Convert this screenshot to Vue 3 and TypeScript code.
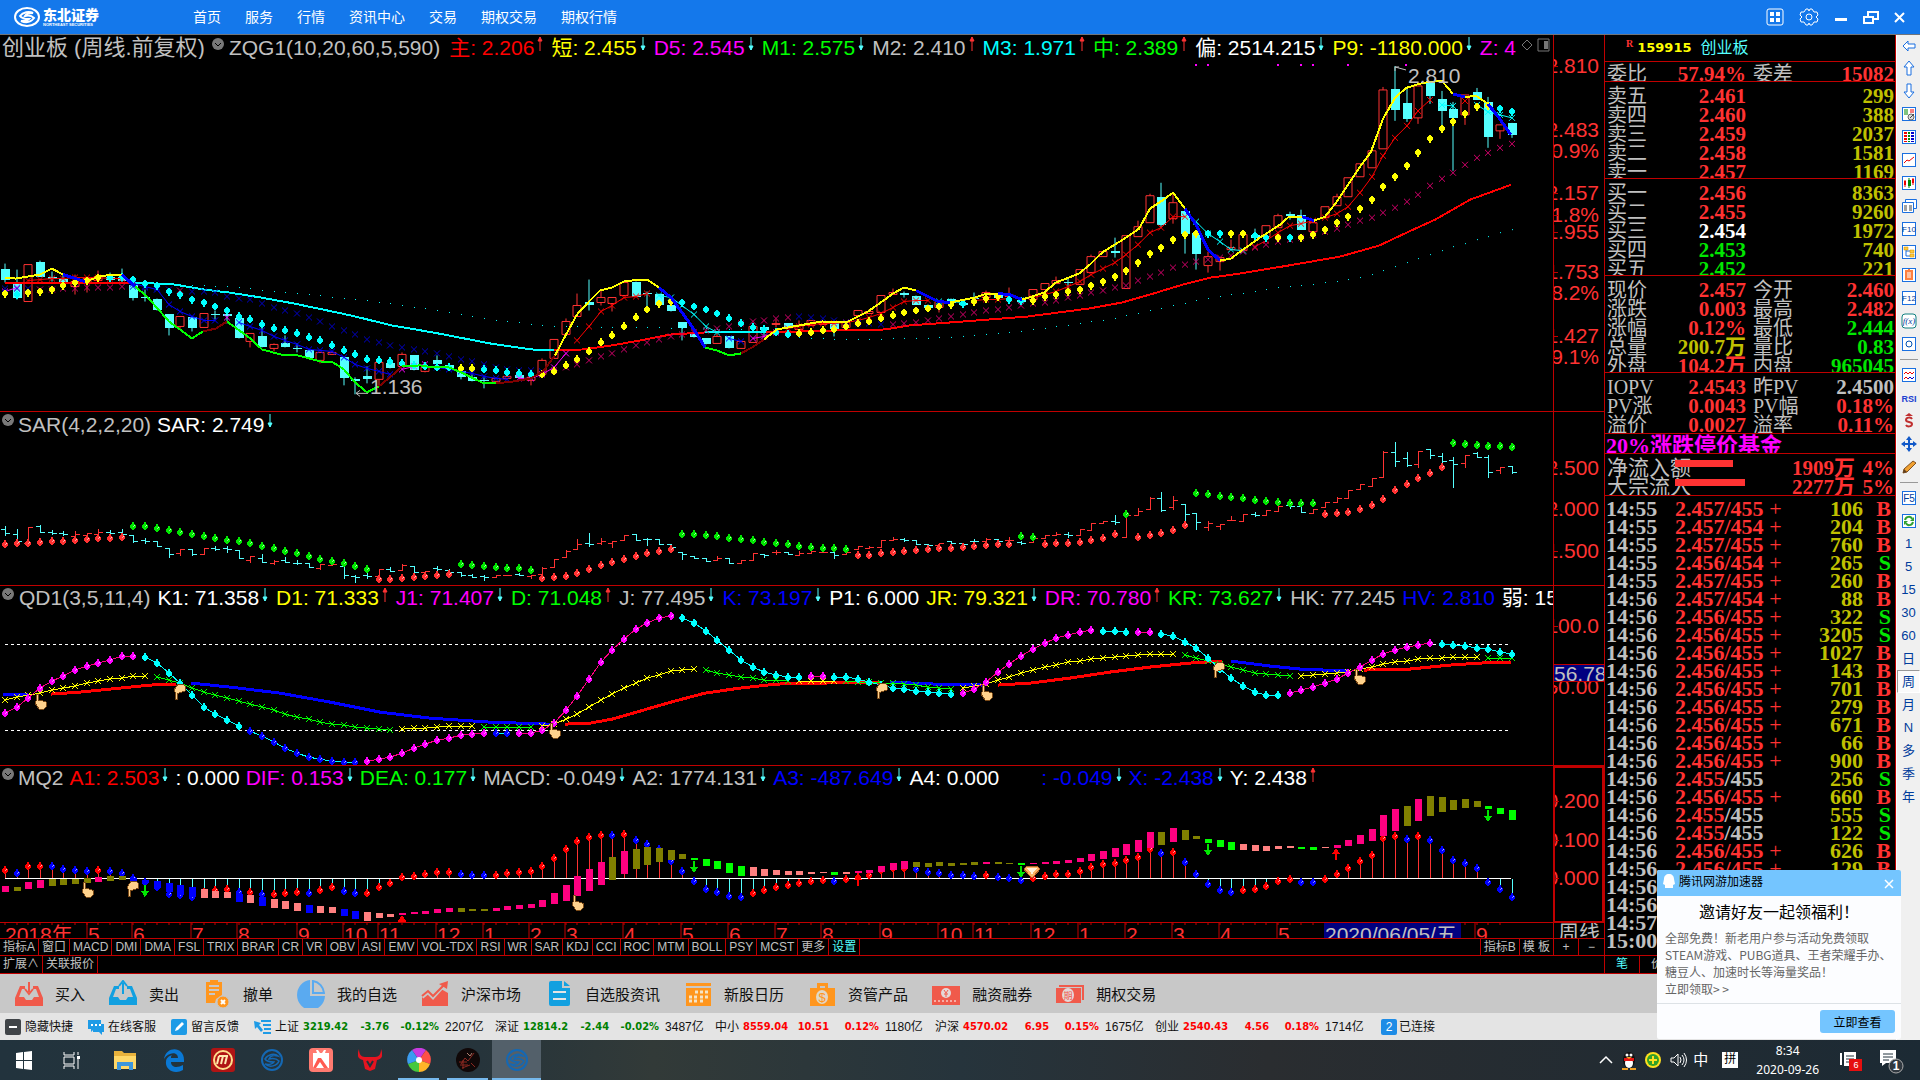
<script setup lang="ts">
type Pt = [number, number]
type Run = [number, string]
interface Mark { x: number; y: number; color: string }
interface Seg { color: string; d: string }
interface Reading { text: string; color: string; dir?: 'up' | 'down'; gap?: boolean }

const RED = '#ff3232'
const CYAN = '#00ffff'
const YELLOW = '#ffff00'
const MAGENTA = '#ff00ff'
const BLUE = '#0000ff'
const LIME = '#00ff00'
const SILVER = '#c0c0c0'
const BARS = 130

const barX = (i: number): number => Math.round(5 + 11.68 * i)
const parse = (s: string): Pt[] => s.trim().split(/\s+/).map((p) => p.split(',').map(Number) as Pt)

function valueAt(pts: Pt[], x: number): number {
  if (x <= pts[0][0]) return pts[0][1]
  for (let k = 1; k < pts.length; k++) {
    if (x <= pts[k][0]) {
      const [x0, y0] = pts[k - 1]
      const [x1, y1] = pts[k]
      return Math.round(y0 + ((y1 - y0) * (x - x0)) / (x1 - x0))
    }
  }
  return pts[pts.length - 1][1]
}

function series(s: string, runs: Run[]): { marks: Mark[]; lines: Seg[] } {
  const pts = parse(s)
  const marks: Mark[] = []
  const lines: Seg[] = []
  let i = 0
  for (const [end, color] of runs) {
    const run: string[] = []
    for (; i <= end && i < BARS; i++) {
      const x = barX(i)
      const y = valueAt(pts, x)
      marks.push({ x, y, color })
      run.push(`${x} ${y}`)
    }
    if (run.length > 1) lines.push({ color, d: 'M' + run.join('L') })
  }
  return { marks, lines }
}

const line = (color: string, s: string): Seg => ({ color, d: 'M' + parse(s).map((p) => p.join(' ')).join('L') })

function group(marks: Mark[], shape: (m: Mark) => string): Seg[] {
  const by = new Map<string, string>()
  for (const m of marks) by.set(m.color, (by.get(m.color) ?? '') + shape(m))
  return [...by].map(([color, d]) => ({ color, d }))
}
const dots = (m: Mark[]): Seg[] => group(m, ({ x, y }) => `M${x - 3} ${y - 1}l2 -2v-1h2v1l2 2v2l-2 2v1h-2v-1l-2 -2z`)
const crosses = (m: Mark[]): Seg[] => group(m, ({ x, y }) => `M${x - 3} ${y - 3}l6 6M${x - 3} ${y + 3}l6 -6`)
const glints = (m: Mark[]): string => m.map(({ x, y }) => `M${x} ${y}h1v-1h1`).join('')

/* main chart */
const shortLine: Seg[] = [
  line(YELLOW, '5,278 16,279 40,275 52,269 63,275'),
  line(BLUE, '63,275 85,282'),
  line(YELLOW, '85,282 100,277 112,275 122,275'),
  line(BLUE, '122,275 135,287'),
  line(LIME, '135,287 147,297 169,322 192,339 203,332'),
  line('#800000', '203,332 216,329 227,322'),
  line(LIME, '227,322 249,338 262,350 284,356 298,356 320,362 333,363 344,370 355,383 367,393 379,387'),
  line('#800000', '379,387 391,377 402,367'),
  line(LIME, '402,367 420,366 433,368 449,368 461,373 473,379 484,384 496,384'),
  line('#800000', '496,384 514,382 531,379 543,372 555,356'),
  line(YELLOW, '555,356 565,337 577,315 589,302 600,291 612,288 624,282 640,280 647,280 659,288'),
  line(BLUE, '659,288 671,298 682,313 694,330 705,348'),
  line(LIME, '705,348 717,351 729,356 741,354'),
  line('#800000', '741,354 752,348 764,340'),
  line(YELLOW, '764,340 777,330 799,326 822,322 846,323 868,312 885,300 893,294 904,288 916,291'),
  line(BLUE, '916,291 938,302 950,303'),
  line(YELLOW, '950,303 975,298 987,294 998,294'),
  line(BLUE, '998,294 1009,295 1022,300'),
  line(YELLOW, '1022,300 1032,297 1044,293 1056,283 1079,274 1091,264 1102,253 1126,238 1139,229 1150,209 1162,201 1173,193 1185,209'),
  line(BLUE, '1185,209 1196,225 1208,250 1220,261'),
  line(YELLOW, '1220,261 1231,259 1243,250 1260,238 1280,225 1289,217 1302,217'),
  line(BLUE, '1302,217 1314,221'),
  line(YELLOW, '1314,221 1325,217 1336,203 1348,185 1360,167 1371,152 1383,119 1395,98 1406,88 1419,84 1429,82 1442,81 1453,94'),
  line(BLUE, '1453,94 1465,97'),
  line(YELLOW, '1465,97 1476,96 1488,104'),
  line(BLUE, '1488,104 1499,118 1511,135'),
]
const trend: Seg[] = [
  line('#ff0000', '5,283 135,283'),
  line(CYAN, '135,283 175,285 204,290 229,293 261,298 294,304 318,309 351,316 392,326 433,333 490,344 531,350 554,351'),
  line('#ff0000', '554,351 584,350 612,346 640,341 671,335 705,333'),
  line(CYAN, '705,333 766,333'),
  line('#ff0000', '766,333 836,331 885,330 909,326 950,323 1028,317 1089,309 1122,303 1150,295 1183,285 1211,278 1240,274 1288,266 1340,257 1379,246 1413,230 1435,220 1470,200 1511,185'),
]
const yearDots = series(
  '5,284 160,285 227,287 294,294 367,301 437,311 495,321 555,327 640,328 740,330 799,338 836,340 869,340 950,338 1009,333 1068,326 1113,319 1175,306 1207,299 1254,292 1280,288 1301,286 1336,282 1370,276 1406,263 1442,251 1476,240 1511,230',
  [[129, CYAN]],
).marks.slice(15).map((m) => `M${m.x} ${m.y}h1`).join('')

const bigDots = dots(series(
  '5,294 17,295 28,293 40,292 52,290 63,286 75,283 87,281 98,278 122,277 133,280 145,284 157,286 168,292 180,295 192,300 203,303 215,307 227,311 239,317 250,320 262,325 274,329 297,334 320,341 344,351 367,360 379,361 402,364 425,367 461,369 484,370 530,375 542,375 554,372 565,367 577,360 589,352 600,344 612,336 635,319 647,310 659,304 671,302 682,303 705,310 717,314 741,324 752,328 787,335 811,333 834,330 846,327 881,319 904,313 939,307 962,304 986,299 997,297 1009,300 1032,301 1044,297 1079,290 1102,282 1114,277 1126,271 1138,263 1149,254 1161,248 1173,240 1184,235 1196,234 1243,234 1266,238 1301,238 1313,235 1324,230 1336,224 1348,217 1371,201 1383,187 1406,167 1418,153 1429,140 1441,130 1453,122 1465,114 1476,107 1488,106 1499,109 1511,112',
  [[0, YELLOW], [1, CYAN], [8, YELLOW], [38, CYAN], [40, YELLOW], [45, CYAN], [57, YELLOW], [67, CYAN], [81, YELLOW], [82, CYAN], [85, YELLOW], [87, CYAN], [102, YELLOW], [104, CYAN], [106, YELLOW], [108, CYAN], [109, YELLOW], [110, CYAN], [127, YELLOW], [129, CYAN]],
).marks)

const slowCrosses = crosses(series(
  '5,289 28,289 40,290 75,289 122,287 157,288 180,291 215,293 227,297 250,300 274,308 297,314 320,322 344,331 367,340 390,346 414,350 437,354 461,360 484,365 507,370 542,372 554,371 577,365 600,357 624,350 647,343 671,337 694,333 717,329 752,322 787,318 799,317 822,319 846,323 892,325 916,323 962,315 1009,308 1056,301 1079,296 1126,286 1149,277 1173,268 1196,262 1231,256 1254,248 1278,242 1301,238 1336,229 1371,218 1406,203 1429,187 1453,173 1476,158 1499,148 1511,144',
  [[2, '#0000c8'], [10, '#d4006a'], [14, '#0000c8'], [15, '#d4006a'], [46, '#0000c8'], [67, '#d4006a'], [75, '#0000c8'], [129, '#d4006a']],
).marks)

const fast = series(
  '5,292 17,288 28,281 52,279 75,278 122,279 135,285 157,290 168,304 180,312 192,317 203,321 216,321 227,318 239,323 262,331 274,337 297,345 309,350 333,352 344,358 355,365 367,369 390,375 402,370 425,365 437,368 461,372 484,377 507,380 530,379 542,375 554,368 565,355 577,341 589,327 600,313 624,298 640,296 647,294 671,298 682,306 694,315 705,326 717,333 729,339 741,342 764,337 787,329 811,325 846,323 857,321 881,314 904,302 927,301 962,303 974,301 1009,299 1021,301 1032,298 1056,292 1079,283 1091,275 1114,264 1126,255 1138,245 1149,233 1161,228 1173,217 1184,217 1196,222 1208,234 1219,241 1231,250 1243,251 1254,248 1278,233 1289,226 1313,221 1336,215 1348,207 1359,194 1371,179 1383,156 1394,139 1406,127 1418,111 1429,100 1441,105 1453,106 1465,101 1476,104 1488,112 1511,118',
  [[1, MAGENTA], [10, '#ff0000'], [18, BLUE], [19, MAGENTA], [33, BLUE], [36, MAGENTA], [43, BLUE], [48, MAGENTA], [55, '#ff0000'], [61, CYAN], [63, BLUE], [66, MAGENTA], [79, '#ff0000'], [82, CYAN], [86, '#ff0000'], [87, CYAN], [101, '#ff0000'], [106, CYAN], [122, '#ff0000'], [124, CYAN], [125, '#ff0000'], [129, CYAN]],
)
const fastCrosses = crosses(fast.marks)

/* each candle: direction, high, body top, body bottom, low */
const candleText = `c264,269,280,283 c270,282,298,300 r265,265,302,302 c261,262,277,277 c272,277,279,282 c274,279,282,285 r275,282,287,295 r279,279,283,293 r271,277,281,281 c273,277,280,284
c269,277,281,284 c285,285,298,301 c290,297,298,302 c299,299,311,311 c315,315,329,336 r317,317,327,330 c318,318,329,332 r314,314,328,328 c311,315,316,320 c311,315,317,324
c319,319,339,339 r334,334,342,348 c328,337,348,348 r344,345,349,352 c336,344,348,348 c344,349,350,353 c351,351,359,359 r353,353,361,364 r352,353,355,355 c358,358,379,386
c378,380,382,395 c367,377,380,384 r363,363,380,386 c359,364,369,369 r353,355,367,367 c356,356,371,371 r368,368,372,373 c356,361,365,371 c364,366,370,370 c372,372,378,380
c375,378,382,382 c378,381,382,389 r379,379,382,382 r377,377,379,379 c373,376,379,379 r378,378,381,386 r359,361,375,377 r340,340,359,359 r319,322,335,335 r294,306,317,317
c280,302,305,311 r290,298,303,306 r298,298,304,312 r283,283,296,296 c282,282,297,297 c292,293,294,308 c294,294,305,305 c305,305,312,312 c323,323,329,341 c334,334,338,338
c339,339,345,345 r333,337,344,344 c337,337,349,349 r342,342,349,349 r327,327,343,343 c328,328,331,336 r320,324,325,328 c324,324,329,329 r321,326,330,330 r321,321,326,326
r323,323,325,325 c323,323,330,337 r323,323,328,328 r311,311,316,316 r310,312,314,314 r296,296,313,313 r289,293,295,295 c292,293,295,298 c296,296,305,305 c305,305,308,308
r302,302,308,313 c299,299,303,303 c303,303,305,305 c293,298,299,304 r291,293,298,298 c294,294,298,298 r288,295,297,298 c298,300,302,305 r290,290,300,300 r284,284,290,290
r277,281,284,284 c278,282,283,289 r270,270,285,285 r255,257,273,273 r252,252,257,257 c238,251,253,258 r236,236,289,289 r221,227,237,237 r194,196,223,223 c183,197,225,228
r193,203,219,224 c211,211,234,254 c233,233,254,270 r252,257,266,273 r258,258,262,271 r240,248,250,250 r235,235,251,251 c229,235,238,240 r226,226,237,237 r214,216,228,228
c212,214,216,220 c210,215,230,230 r223,223,232,232 r207,207,218,218 r194,197,206,206 r178,178,197,197 r164,164,177,177 r151,151,168,168 r87,90,149,149 c66,89,110,121
c88,103,119,122 r86,86,118,124 c83,83,96,104 c91,99,111,130 c102,109,118,171 r95,95,115,125 c88,92,100,100 c97,102,137,148 r125,125,131,139 c123,123,135,138`
const candles = candleText.split(/\s+/).map((t, i) => {
  const [high, top, bottom, low] = t.slice(1).split(',').map(Number)
  return { x: barX(i), up: t[0] === 'r', high, top, bottom, low }
})
const fallWicks = candles.filter((c) => !c.up).map((c) => `M${c.x} ${c.high}V${c.low}`).join('')
const fallBodies = candles.filter((c) => !c.up).map((c) => `M${c.x - 4} ${c.top}h9V${Math.max(c.bottom, c.top + 1)}h-9z`).join('')
const riseShapes = candles.filter((c) => c.up).map((c) => `M${c.x} ${c.high}V${c.top}M${c.x} ${c.bottom}V${c.low}M${c.x - 4} ${c.top}h8V${c.bottom}h-8z`).join('')
const signalDots = [1196, 1208, 1278, 1301, 1313, 1348, 1406]

/* SAR */
const sarY = (y: number): number => Math.round(469 + (0.017 + (y - 130) / 195) * 83)
const sarBars = (up: boolean): string => candles.filter((c) => c.up === up).map((c) => {
  const open = sarY(up ? c.bottom : c.top)
  const close = sarY(up ? c.top : c.bottom)
  return `M${c.x} ${sarY(c.high)}V${sarY(c.low) + 1}M${c.x - 4} ${open}h4M${c.x} ${close}h5`
}).join('')
const sarRise = sarBars(true)
const sarFall = sarBars(false)
const G = '#00e600'
const sar = series(
  '5,545 122,538 133,527 145,527 168,531 215,539 239,542 262,547 297,554 320,560 344,564 367,570 379,580 402,579 425,577 449,575 461,565 484,567 530,570 542,579 565,577 589,570 612,563 635,557 647,554 671,550 682,535 694,535 717,537 741,540 776,544 811,548 846,550 857,556 869,556 892,553 927,550 962,548 997,545 1009,545 1021,537 1032,537 1044,545 1079,543 1114,537 1126,515 1138,538 1161,534 1184,529 1196,494 1231,498 1266,502 1289,504 1313,504 1324,515 1348,513 1371,507 1383,500 1394,492 1418,479 1441,470 1453,444 1476,446 1499,447 1511,448',
  [[10, RED], [31, G], [38, RED], [45, G], [57, RED], [72, G], [86, RED], [88, G], [95, RED], [96, G], [101, RED], [112, G], [123, RED], [129, G]],
).marks
const sarDots = dots(sar)
const sarGlints = glints(sar)

/* QD1 */
const jRuns: Run[] = [[11, MAGENTA], [20, CYAN], [30, BLUE], [41, MAGENTA], [43, BLUE], [57, MAGENTA], [68, CYAN], [70, MAGENTA], [81, CYAN], [93, MAGENTA], [96, CYAN], [98, MAGENTA], [109, CYAN], [122, MAGENTA], [129, CYAN]]
const j = series(
  '5,713 17,707 28,698 40,688 52,681 63,676 75,670 98,663 122,656 133,656 145,657 157,663 168,672 180,683 192,695 203,706 215,714 239,726 262,736 285,748 309,757 332,761 355,762 367,761 390,757 414,748 437,740 461,735 484,733 530,733 542,730 554,723 565,711 577,696 589,679 600,663 612,650 624,639 635,630 647,623 659,618 671,616 682,618 694,623 705,630 717,640 729,650 741,660 752,667 764,672 787,677 822,676 846,677 857,679 892,688 927,692 951,694 962,693 974,689 986,682 997,673 1009,664 1021,656 1032,649 1044,643 1056,638 1067,635 1091,630 1126,632 1149,632 1161,634 1173,636 1184,641 1196,648 1208,658 1219,668 1231,678 1243,686 1254,692 1266,695 1278,695 1289,693 1313,687 1336,679 1359,668 1371,661 1383,654 1406,647 1429,643 1441,644 1465,646 1488,649 1511,654',
  jRuns,
)
const jDots = dots(j.marks)
const jGlints = glints(j.marks.filter((m) => m.color !== CYAN))
const jLines = j.lines.map((l) => ({ ...l, color: l.color === BLUE ? CYAN : l.color === MAGENTA ? '#ff0080' : l.color }))
const k = series(
  '5,700 28,695 52,690 98,681 133,676 145,676 157,677 180,683 203,692 227,698 262,707 297,717 332,724 367,728 390,730 402,729 449,726 472,726 484,727 530,727 542,726 554,724 577,714 600,700 624,688 647,678 671,671 694,669 705,670 729,675 764,680 799,681 846,681 892,683 951,689 962,688 986,684 1009,677 1032,670 1067,662 1102,658 1149,654 1173,654 1184,655 1208,661 1231,667 1254,673 1289,676 1301,676 1348,672 1371,667 1394,662 1429,658 1476,657 1488,658 1511,658',
  [[12, YELLOW], [33, LIME], [40, YELLOW], [45, LIME], [59, YELLOW], [67, LIME], [71, YELLOW], [81, LIME], [100, YELLOW], [110, LIME], [126, YELLOW], [129, LIME]],
)
const kCrosses = crosses(k.marks)
const dLines: Seg[] = [
  line(BLUE, '3,694 28,694'),
  line('#ff0000', '51,694 80,692 120,688 150,685 176,684'),
  line(BLUE, '191,683 230,687 280,693 330,702 380,712 430,718 490,722 550,724'),
  line('#ff0000', '565,724 590,723 612,719 640,711 671,702 705,693 740,688 776,684 870,682 880,682'),
  line(BLUE, '890,682 935,684 985,685'),
  line('#ff0000', '998,685 1030,683 1070,678 1110,672 1150,667 1190,663 1222,661'),
  line(BLUE, '1231,661 1270,666 1300,669 1350,671'),
  line('#ff0000', '1364,670 1410,669 1450,665 1480,663 1511,662'),
]
const qdHands = [
  { x: 41, y: 701, down: false }, { x: 180, y: 692, down: true }, { x: 555, y: 730, down: false },
  { x: 882, y: 691, down: true }, { x: 987, y: 692, down: false }, { x: 1219, y: 670, down: true }, { x: 1360, y: 676, down: false },
]

/* MQ2 */
const stemText = 'r870 b873 r866 r866 b866 b869 b870 b871 r870 b871 b873 b878 b882 b887 b894 b895 b897 r892 r890 r889 b892 r892 b894 r894 r893 r892 b893 r890 r887 b891 b893 r893 r887 r883 r877 r876 r874 r872 r872 b874 b875 b875 r875 r873 r872 r871 r866 r858 r849 r841 r837 r835 b835 r834 b840 b844 b849 b861 b871 b881 b889 b892 b896 b897 r893 r890 r887 r885 r883 r881 r880 b881 r879 r877 r875 r870 r868 r868 b869 b872 b873 b875 b875 b876 r875 b877 b878 b880 r878 r876 r874 r874 r871 r867 r864 r863 r860 r857 r849 b853 r852 b862 b874 b884 b890 b892 r890 r889 r886 r881 r879 b882 b882 r879 r874 r868 r861 r855 r838 r836 b839 r836 b840 b850 b860 b863 b868 b882 b889 b897'
const stems: Mark[] = stemText.split(' ').map((t, i) => ({ x: barX(i), y: Number(t.slice(1)), color: t[0] === 'r' ? '#ff0000' : BLUE }))
const stemDots = dots(stems)
const stemGlints = glints(stems)
const stemsUp = stems.filter((s) => s.y < 878).map((s) => `M${s.x} ${s.y}V878`).join('')
const stemsDown = stems.filter((s) => s.y > 879).map((s) => `M${s.x} ${s.y}V879`).join('')
const blockText = 'M886,892 O887,891 M882,889 M880,888 O879,886 O879,885 O879,884 O878,883 M877,882 O876,881 O876,880 B878,881 B880,883 B881,888 B883,892 B885,895 B887,897 P889,898 P891,898 P892,898 B894,902 P895,903 B897,906 P899,908 P901,909 P903,911 B905,913 P906,913 P907,913 B909,916 B911,919 P912,921 P913,918 P914,917 M913,915 M912,914 M911,914 M909,913 M908,912 O908,912 O909,911 O909,911 M908,911 M906,910 M905,909 M904,908 M900,907 M893,904 M885,901 M876,896 M869,891 M862,885 O857,880 M851,874 O849,869 O847,865 O848,862 O850,860 O854,859 G858,860 G859,866 G861,869 G863,873 G866,876 P867,876 P869,876 P870,875 P871,875 P871,875 P872,874 P872,873 G872,875 P872,874 M871,873 M870,873 M866,872 M863,870 M861,869 O862,867 O863,867 O862,866 O863,866 O863,865 O862,865 M862,864 O862,864 O863,864 G863,865 M863,864 M862,864 M861,864 M860,863 M858,862 M854,861 M851,859 M848,857 M844,855 M840,852 M832,848 O832,845 M828,842 O830,840 O836,839 G839,843 G840,847 G842,850 P844,850 P845,851 P846,851 P846,849 P846,848 G847,849 G847,850 P847,848 M845,848 M840,846 M835,844 M829,841 M815,836 M809,831 O806,826 M799,821 O796,816 O797,812 O800,810 O799,808 O801,807 G806,809 G808,814 G810,820'
const blockColor: Record<string, string> = { M: '#ff0080', O: '#808000', B: BLUE, P: '#ff8080', G: LIME }
const blocks = blockText.split(' ').map((t, i) => {
  const [top, bottom] = t.slice(1).split(',').map(Number)
  return { x: barX(i) - 3, y: top, h: bottom - top, color: blockColor[t[0]] }
})
const mqHands = [{ x: 88, y: 889, down: false }, { x: 133, y: 889, down: true }, { x: 578, y: 902, down: false }]
const sellArrows = [[145, 885], [694, 861], [1021, 866], [1208, 844], [1488, 810]]
const buyArrows = [[858, 875], [1336, 849]]

/* panel titles */
const mainReadings: Reading[] = [
  { text: 'ZQG1(10,20,60,5,590)', color: SILVER },
  { text: '主: 2.206', color: '#ff0000', dir: 'up' },
  { text: '短: 2.455', color: YELLOW, dir: 'down' },
  { text: 'D5: 2.545', color: MAGENTA, dir: 'down' },
  { text: 'M1: 2.575', color: LIME, dir: 'down' },
  { text: 'M2: 2.410', color: SILVER, dir: 'up' },
  { text: 'M3: 1.971', color: CYAN, dir: 'up' },
  { text: '中: 2.389', color: LIME, dir: 'up' },
  { text: '偏: 2514.215', color: '#ffffff', dir: 'down' },
  { text: 'P9: -1180.000', color: YELLOW, dir: 'down' },
  { text: 'Z: 4', color: MAGENTA },
]
const sarReadings: Reading[] = [
  { text: 'SAR(4,2,2,20)', color: SILVER },
  { text: 'SAR: 2.749', color: '#ffffff', dir: 'down' },
]
const qdReadings: Reading[] = [
  { text: 'QD1(3,5,11,4)', color: SILVER },
  { text: 'K1: 71.358', color: '#ffffff', dir: 'down' },
  { text: 'D1: 71.333', color: YELLOW, dir: 'up' },
  { text: 'J1: 71.407', color: MAGENTA, dir: 'down' },
  { text: 'D: 71.048', color: LIME, dir: 'up' },
  { text: 'J: 77.495', color: SILVER, dir: 'down' },
  { text: 'K: 73.197', color: BLUE, dir: 'down' },
  { text: 'P1: 6.000', color: '#ffffff' },
  { text: 'JR: 79.321', color: YELLOW, dir: 'down' },
  { text: 'DR: 70.780', color: MAGENTA, dir: 'up' },
  { text: 'KR: 73.627', color: LIME, dir: 'down' },
  { text: 'HK: 77.245', color: SILVER },
  { text: 'HV: 2.810', color: BLUE },
  { text: '弱: 15', color: '#ffffff' },
]
const mqReadings: Reading[] = [
  { text: 'MQ2', color: SILVER },
  { text: 'A1: 2.503', color: '#ff0000', dir: 'down' },
  { text: ': 0.000', color: '#ffffff' },
  { text: 'DIF: 0.153', color: MAGENTA, dir: 'down' },
  { text: 'DEA: 0.177', color: LIME, dir: 'down' },
  { text: 'MACD: -0.049', color: SILVER, dir: 'down' },
  { text: 'A2: 1774.131', color: SILVER, dir: 'down' },
  { text: 'A3: -487.649', color: BLUE, dir: 'down' },
  { text: 'A4: 0.000', color: '#ffffff' },
  { text: ': -0.049', color: BLUE, dir: 'down', gap: true },
  { text: 'X: -2.438', color: BLUE, dir: 'down' },
  { text: 'Y: 2.438', color: '#ffffff', dir: 'up' },
]
const mainScale = [
  { t: '2.810', y: 31 }, { t: '2.483', y: 95 }, { t: '0.9%', y: 116 }, { t: '2.157', y: 158 }, { t: '1.8%', y: 180 },
  { t: '1.955', y: 197 }, { t: '1.753', y: 237 }, { t: '8.2%', y: 258 }, { t: '1.427', y: 301 }, { t: '9.1%', y: 322 },
]
const sarScale = [{ t: '2.500', y: 56 }, { t: '2.000', y: 97 }, { t: '1.500', y: 139 }]
const qdScale = [{ t: '100.0', y: 40 }, { t: '50.00', y: 101 }]
const mqScale = [{ t: '0.200', y: 33 }, { t: '0.100', y: 72 }, { t: '0.000', y: 110 }]

const months: [number, string][] = [
  [87, '5'], [132, '6'], [191, '7'], [237, '8'], [297, '9'], [343, '10'], [378, '11'], [436, '12'], [483, '1'], [529, '2'], [565, '3'], [623, '4'],
  [681, '5'], [728, '6'], [775, '7'], [821, '8'], [880, '9'], [938, '10'], [973, '11'], [1031, '12'], [1078, '1'], [1125, '2'], [1172, '3'], [1219, '4'], [1277, '5'], [1475, '9'],
]
const minorTicks = Array.from({ length: 129 }, (_, i) => `M${barX(i)} 0v2`).join('')

const tabs = ['指标A', '窗口', 'MACD', 'DMI', 'DMA', 'FSL', 'TRIX', 'BRAR', 'CR', 'VR', 'OBV', 'ASI', 'EMV', 'VOL-TDX', 'RSI', 'WR', 'SAR', 'KDJ', 'CCI', 'ROC', 'MTM', 'BOLL', 'PSY', 'MCST', '更多', '设置']

/* quotes */
const asks = [['卖五', '2.461', '299'], ['卖四', '2.460', '388'], ['卖三', '2.459', '2037'], ['卖二', '2.458', '1581'], ['卖一', '2.457', '1169']]
const bids = [['买一', '2.456', '8363', 'r'], ['买二', '2.455', '9260', 'r'], ['买三', '2.454', '1972', 'w'], ['买四', '2.453', '740', 'g'], ['买五', '2.452', '221', 'g']]
const now = [
  ['现价', '2.457', 'r', '今开', '2.460', 'r'],
  ['涨跌', '0.003', 'r', '最高', '2.482', 'r'],
  ['涨幅', '0.12%', 'r', '最低', '2.444', 'g'],
  ['总量', '200.7万', 'y', '量比', '0.83', 'g'],
  ['外盘', '104.2万', 'r', '内盘', '965045', 'g'],
]
const pv = [
  ['IOPV', '2.4543', 'r', '昨PV', '2.4500', 's'],
  ['PV涨', '0.0043', 'r', 'PV幅', '0.18%', 'r'],
  ['溢价', '0.0027', 'r', '溢率', '0.11%', 'r'],
]
const flows = [{ name: '净流入额', bar: 58, amount: '1909万', pct: '4%' }, { name: '大宗流入', bar: 70, amount: '2277万', pct: '5%' }]
const deals = `14:55 457 455 106 B|14:55 457 454 204 B|14:55 457 455 760 B|14:55 456 454 265 S|14:55 457 455 260 B|14:56 457 454 88 B|14:56 456 455 322 S|14:56 456 455 3205 S|14:56 456 455 1027 B|14:56 456 455 143 B|14:56 456 455 701 B|14:56 456 455 279 B|14:56 456 455 671 B|14:56 456 455 66 B|14:56 456 455 900 B|14:56 455 455 256 S|14:56 456 455 660 B|14:56 455 455 555 S|14:56 455 455 122 S|14:56 456 455 626 B|14:56 456 455 129 B|14:56|14:56|14:57|15:00`
  .split('|').map((r) => {
    const [time, bid, ask, volume, side] = r.split(' ')
    return { time, bid, ask, volume, side }
  })

/* icons */
const frame = '<rect x="1.5" y="1.5" width="13" height="13" fill="#fff" stroke="#1a6fe0"/>'
const sideIcons: { name: string; art: string }[] = [
  { name: '后退', art: '<path d="M2 8l5-5v3h7v4H7v3z" fill="#fff" stroke="#1a6fe0"/>' },
  { name: '上翻', art: '<path d="M8 1l5 6h-3v8H6V7H3z" fill="#fff" stroke="#1a6fe0"/>' },
  { name: '下翻', art: '<path d="M8 15l5-6h-3V1H6v8H3z" fill="#fff" stroke="#1a6fe0"/>' },
  { name: '自选', art: frame + '<path d="M3 4h4M3 6h4M3 8h4" stroke="#080"/><path d="M9 4h4M9 6h4" stroke="#e00"/><circle cx="10" cy="11" r="3" fill="#ddd" stroke="#666"/><path d="M9 12l4-4" stroke="#444"/>' },
  { name: '报价', art: frame + '<path d="M4.5 3v10" stroke="#e00" stroke-width="3" stroke-dasharray="2 1"/><path d="M8 3v10" stroke="#080" stroke-width="2" stroke-dasharray="2 1"/><path d="M11.5 3v10" stroke="#00c" stroke-width="3" stroke-dasharray="2 1"/>' },
  { name: '分时', art: frame + '<path d="M3 11l3-3 2 1 5-4" fill="none" stroke="#e00"/>' },
  { name: 'K线', art: frame + '<path d="M4 5v7M12 3v7" stroke="#e00"/><path d="M3 6h2v4H3zM11 4h2v4h-2z" fill="#e00"/><path d="M8 3v10" stroke="#080"/><path d="M7 5h3v6H7z" fill="#080"/>' },
  { name: '资讯', art: '<path d="M4.5 1.5h11v9h-11z" fill="#fff" stroke="#1a6fe0"/><path d="M1.5 4.5h11v10h-11z" fill="#fff" stroke="#1a6fe0"/><path d="M3 8h3M8 8h3M3 10h3M8 10h3M3 12h3M8 12h3" stroke="#444"/>' },
  { name: 'F10', art: frame + '<text x="8" y="11" font-size="8" text-anchor="middle" fill="#003c9c" font-family="Liberation Sans, sans-serif">F10</text>' },
  { name: '板块', art: frame + '<path d="M5 6v6h4M5 7h4" fill="none" stroke="#1a6fe0"/><path d="M3 3h4v3H3zM9 6h4v3H9zM9 10h4v3H9z" fill="#ffc83c" stroke="#c89000" stroke-width=".5"/>' },
  { name: '自', art: frame + '<path d="M7 2h2v1h3v10H4V3h3z" fill="#ff8040"/><path d="M6 6h4M6 8h4M6 10h4" stroke="#fff"/>' },
  { name: 'F12', art: frame + '<text x="8" y="11" font-size="8" text-anchor="middle" fill="#003c9c" font-family="Liberation Sans, sans-serif">F12</text>' },
  { name: '公式', art: '<rect x="1" y="1" width="14" height="14" rx="3" fill="#fff" stroke="#108080"/><text x="8" y="11" font-size="9" font-style="italic" text-anchor="middle" fill="#003c9c" font-family="Liberation Serif, serif">f(x)</text>' },
  { name: '区间', art: frame + '<circle cx="8" cy="8" r="3" fill="none" stroke="#0050b0"/>' },
  { name: '', art: '' },
  { name: '叠加', art: frame + '<path d="M3 7l2-2 2 2 2-2 2 2 2-2M3 12l2-2 2 2" fill="none" stroke="#e00"/><path d="M7 12l2-2 2 2 2-2" fill="none" stroke="#00c"/>' },
  { name: 'RSI', art: '<text x="8" y="12" font-size="9" font-weight="bold" text-anchor="middle" fill="#2040d0" font-family="Liberation Sans, sans-serif">RSI</text>' },
  { name: '分红', art: '<path d="M8 0l4 3H4z" fill="#c03030"/><path d="M11 6c-1-2-6-2-6 1s6 1 6 4-5 3-6 1" fill="none" stroke="#c03030" stroke-width="2"/>' },
  { name: '移动', art: '<path d="M8 0l3 4H9v3h3V5l4 3-4 3V9H9v3h2l-3 4-3-4h2V9H4v2L0 8l4-3v2h3V4H5z" fill="#1058c8"/>' },
  { name: '画线', art: '<path d="M2 14l1-4 9-8 3 2-9 9z" fill="#f0a030" stroke="#805020"/><path d="M2 14l1-4 3 3z" fill="#604020"/>' },
  { name: '', art: '' },
  { name: 'F5', art: frame + '<text x="8" y="12" font-size="10" text-anchor="middle" fill="#003c9c" font-family="Liberation Sans, sans-serif">F5</text>' },
  { name: '刷新', art: frame + '<path d="M4 7c1-4 6-4 7-1M12 9c-1 4-6 4-7 1" fill="none" stroke="#30a030" stroke-width="2"/><path d="M13 4v4H9zM3 12V8h4z" fill="#30a030"/>' },
]
const periods = ['1', '5', '15', '30', '60', '日', '周', '月', 'N', '多', '季', '年']

const actions: { label: string; art: string }[] = [
  { label: '买入', art: '<path d="M5 6h5v3H7L4 17h5l2 3h6l2-3h5l-3-8h-3V6h5l5 12v8H0v-8z" fill="#f05a4b"/><path d="M14 2v10M10 9l4 5 4-5" stroke="#f05a4b" stroke-width="2" fill="none"/>' },
  { label: '卖出', art: '<path d="M5 6h5v3H7L4 17h5l2 3h6l2-3h5l-3-8h-3V6h5l5 12v7H0v-7z" fill="#12a0e0"/><path d="M14 14V3M10 6l4-5 4 5" stroke="#12a0e0" stroke-width="2" fill="none"/>' },
  { label: '撤单', art: '<path d="M3 2h4V0h8v2h4v13l-6 4-1 4H3z" fill="#ff961e"/><path d="M6 6h10M6 10h10M6 14h6" stroke="#c8c8c8" stroke-width="2"/><circle cx="20" cy="22" r="6" fill="#ff961e" stroke="#c8c8c8"/><path d="M18 20l4 4M22 20l-4 4" stroke="#fff" stroke-width="2"/>' },
  { label: '我的自选', art: '<path d="M13 0A14 15 0 1 0 28 16H13z" fill="#5aaaf0"/><path d="M16 1a13 13 0 0 1 11 12H16z" fill="none" stroke="#5aaaf0" stroke-width="2"/>' },
  { label: '沪深市场', art: '<path d="M1 26V15l5-3 6 5 8-8 7 4v13z" fill="#f05a4b"/><path d="M1 17l6-5 5 5L23 5" fill="none" stroke="#c8c8c8" stroke-width="4"/><path d="M1 16l6-5 5 5L24 4" fill="none" stroke="#f05a4b" stroke-width="2"/><path d="M18 4l9-3-1 8z" fill="#f05a4b"/>' },
  { label: '自选股资讯', art: '<path d="M6 1h11v7h8v16q0 2-2 2H6q-2 0-2-2V3q0-2 2-2zM19 1l6 5h-6z" fill="#12a0e0"/><path d="M8 12h13M8 19h13" stroke="#e4e4e4" stroke-width="2"/>' },
  { label: '新股日历', art: '<path d="M2 3h25v3H2zM2 8h25v18H2z" fill="#ff961e"/><path d="M11 12h3M16 12h3M21 12h3M5 17h3M10 17h3M16 17h3M21 17h3M5 21h3M10 21h3M16 21h3" stroke="#f4e4c8" stroke-width="3"/>' },
  { label: '资管产品', art: '<path d="M9 3h11v5h7v18H2V8h7zM12 6v2h5V6z" fill="#ff961e" fill-rule="evenodd"/><ellipse cx="14" cy="17" rx="6" ry="7" fill="#e0d8c8"/><text x="14" y="22" font-size="13" text-anchor="middle" fill="#ff961e" font-family="Liberation Sans, sans-serif">$</text>' },
  { label: '融资融券', art: '<path d="M0 6h28v19H0z" fill="#f05a4b"/><path d="M2 21h24" stroke="#fff" stroke-dasharray="2 2"/><circle cx="14" cy="13" r="5" fill="#e4d8d8"/><path d="M12 10l2 3 2-3M14 13v4M12 14h4" stroke="#f05a4b" fill="none"/>' },
  { label: '期权交易', art: '<path d="M3 5h25v15h-2V7H3z" fill="#f05a4b"/><path d="M0 8h25v15H0z" fill="#f05a4b"/><ellipse cx="12" cy="15" rx="6" ry="7" fill="#e4d8d8"/><text x="12" y="19" font-size="9" text-anchor="middle" fill="#f05a4b" font-family="Noto Sans CJK SC, sans-serif">期</text>' },
]
const links: { label: string; art: string }[] = [
  { label: '隐藏快捷', art: '<rect width="16" height="16" rx="2" fill="#404448"/><path d="M4 8h8" stroke="#fff" stroke-width="2"/>' },
  { label: '在线客服', art: '<path d="M0 1h13v9H6l-3 3v-3H0z" fill="#1e9be6"/><path d="M5 5h11v8h-2v3l-3-3H5z" fill="#1e9be6"/><path d="M3 6h2M7 6h2M11 6h2" stroke="#fff" stroke-width="2"/>' },
  { label: '留言反馈', art: '<rect width="16" height="16" rx="2" fill="#1e9be6"/><path d="M4 12l1-3 6-6 2 2-6 6z" fill="#fff"/>' },
]
const indices = [
  { name: '上证', price: '3219.42', change: '-3.76', pct: '-0.12%', amount: '2207亿', down: true },
  { name: '深证', price: '12814.2', change: '-2.44', pct: '-0.02%', amount: '3487亿', down: true },
  { name: '中小', price: '8559.04', change: '10.51', pct: '0.12%', amount: '1180亿', down: false },
  { name: '沪深', price: '4570.02', change: '6.95', pct: '0.15%', amount: '1675亿', down: false },
  { name: '创业', price: '2540.43', change: '4.56', pct: '0.18%', amount: '1714亿', down: false },
]
const swirl = '<circle cx="12" cy="12" r="10" fill="none" stroke="#1468b4" stroke-width="2"/><path d="M5 11c3-5 10-6 13-3-4-1-8 0-9 3 4-1 8 0 10 2-2 5-9 7-14 3 4 1 8 0 9-2-3 0-7 0-9-3z" fill="none" stroke="#1468b4" stroke-width="1.5"/>'
const apps: { name: string; art: string; state?: string }[] = [
  { name: '开始', state: 'system', art: '<path d="M4 5l7-1v8H4zM12 4l8-1v9h-8zM4 13h7v8l-7-1zM12 13h8v9l-8-1z" fill="#fff"/>' },
  { name: '任务视图', state: 'system view', art: '<path d="M4 4v3h10V4M4 21v-3h10v3M4 9h10v7H4zM18 4v3M18 10v11" fill="none" stroke="#fff"/><path d="M17 8h3v3h-3z" fill="#fff"/>' },
  { name: '文件资源管理器', art: '<path d="M1 3h8l2 2h12v16H1z" fill="#e8b23c"/><path d="M1 8h22v13H1z" fill="#ffd868"/><path d="M4 14h16v8h-4v-4H8v4H4z" fill="#3c96dc"/>' },
  { name: 'Edge', art: '<path d="M2 11C4-2 22-2 22 12v2H9c0 6 7 6 12 3v5C13 27 3 22 4 14c0-4 3-6 6-7-1 1-1 2-1 3h7c0-7-10-6-14 1z" fill="#0a78d4"/>' },
  { name: '通达信', art: '<rect width="24" height="24" rx="3" fill="#b01414"/><circle cx="12" cy="12" r="9" fill="none" stroke="#ffdc8c" stroke-width="2"/><path d="M6 16l2-8M10 16l2-8M14 16l2-8M8 8h9" stroke="#ffe8b0" stroke-width="2"/>' },
  { name: '东北证券', art: swirl },
  { name: '远程', art: '<rect width="24" height="24" rx="4" fill="#ff7a70"/><path d="M4 5h4L7 2h2l2 3h2l2-3h2l-1 3h4v15H4z" fill="#fff"/><path d="M4 20l5-10h3l7 10h-4l-4-6-4 6z" fill="#ff5a50"/>' },
  { name: '斗牛', art: '<path d="M1 1c0 5 2 8 6 8h10c4 0 6-3 6-8 3 8 0 10-4 11l-2 9-5 2-5-2-2-9C1 11-2 9 1 1z" fill="#e61420"/><path d="M9 13l3 5 3-5" stroke="#23323c" stroke-width="2" fill="none"/>' },
  { name: '浏览器', state: 'running', art: '<path d="M12 12L5 2a12 12 0 0 1 14 0z" fill="#c83ce0"/><path d="M12 12l7-10a12 12 0 0 1 4 14z" fill="#ff5046"/><path d="M12 12l11 4a12 12 0 0 1-11 8z" fill="#ffb428"/><path d="M12 12v12A12 12 0 0 1 1 16z" fill="#46c83c"/><path d="M12 12L1 16A12 12 0 0 1 5 2z" fill="#3c9cf0"/><circle cx="12" cy="12" r="3" fill="#fff"/>' },
  { name: '播放器', state: 'running', art: '<circle cx="12" cy="12" r="12" fill="#100808"/><path d="M5 16l4-6 3 3 6-8M6 20l8-3M15 15l4 4M3 14h8M4 17h8M7 12v9" stroke="#8c2820" fill="none"/><path d="M11 5l3 3 2-3" stroke="#b08070" fill="none"/>' },
  { name: '东北证券行情', state: 'active', art: swirl },
]
const nav = ['首页', '服务', '行情', '资讯中心', '交易', '期权交易', '期权行情']
</script>

<template>
  <div class="desktop">
    <header class="top">
      <svg class="emblem" width="26" height="20" viewBox="0 0 26 20"><ellipse cx="13" cy="10" rx="12" ry="9" fill="none" stroke="#fff" stroke-width="2" /><path d="M6 9c3-4 9-5 13-3-4 0-7 1-8 3 4-1 7 0 9 2-3 4-8 5-13 3 4 0 7-1 8-2-3 0-7 0-9-3z" fill="none" stroke="#fff" stroke-width="2" /></svg>
      <div class="brand"><strong>东北证券</strong><small>NORTHEAST SECURITIES</small></div>
      <nav><a v-for="n in nav" :key="n" href="#">{{ n }}</a></nav>
      <div class="window-tools">
        <button aria-label="布局"><svg width="18" height="18" viewBox="0 0 18 18"><rect x="1" y="1" width="16" height="16" rx="2" fill="none" stroke="#fff" /><path d="M4 4h4v4H4zM10 4h4v4h-4zM4 10h4v4H4zM10 10h4v4h-4z" fill="#fff" /></svg></button>
        <button aria-label="设置"><svg width="20" height="18" viewBox="0 0 20 18"><path d="M7 1h2l1 2 1-2h2l2 3h3l1 3-2 2 2 2-1 3h-3l-2 3h-2l-1-2-1 2H7l-2-3H2l-1-3 2-2-2-2 1-3h3z" fill="none" stroke="#fff" /><circle cx="10" cy="9" r="3" fill="none" stroke="#fff" /></svg></button>
        <button aria-label="最小化"><svg width="14" height="18" viewBox="0 0 14 18"><path d="M1 10h12v3H1z" fill="#fff" /></svg></button>
        <button aria-label="还原"><svg width="16" height="18" viewBox="0 0 16 18"><path d="M5 8V4h10v7h-4" fill="none" stroke="#fff" stroke-width="2" /><path d="M1 9h9v6H1z" fill="none" stroke="#fff" stroke-width="2" /></svg></button>
        <button aria-label="关闭"><svg width="12" height="18" viewBox="0 0 12 18"><path d="M1 5l9 9M10 5l-9 9" stroke="#fff" stroke-width="2" /></svg></button>
      </div>
    </header>

    <main class="body">
      <div class="left">
        <div class="work">
          <div class="charts">
            <section class="panel main-panel">
              <div class="plot">
                <div class="titles wide low">
                  <span class="stock">创业板 (周线.前复权)</span>
                  <svg class="knob" width="12" height="12" viewBox="0 0 12 12"><circle cx="6" cy="6" r="6" fill="#787878" /><path d="M3 5l3 3 3-3" fill="none" stroke="#000" /></svg>
                  <span v-for="r in mainReadings" :key="r.text" class="reading" :style="{ color: r.color }">{{ r.text }}<svg v-if="r.dir" class="dir" width="9" height="16" viewBox="0 0 9 16"><path v-if="r.dir === 'up'" d="M5 15V1M5 1l-2 4h4z" fill="#ff3232" stroke="#ff3232" /><path v-else d="M5 1v13M5 14l-2-4h4z" fill="#54ffff" stroke="#54ffff" /></svg></span>
                  <svg class="corner" width="30" height="14" viewBox="0 0 30 14"><path d="M6 2l5 5-5 5-5-5z" fill="none" stroke="#777" /><path d="M17 1h11v12H17z" fill="none" stroke="#777" /><path d="M23 3h4v8h-4z" fill="#777" /></svg>
                </div>
                <svg class="canvas" viewBox="0 59 1553 353" preserveAspectRatio="none">
                  <path :d="riseShapes" fill="none" stroke="#ff3232" />
                  <path :d="fallWicks" fill="none" stroke="#54ffff" />
                  <path :d="fallBodies" fill="#54ffff" />
                  <path v-for="(s, i) in trend" :key="'t' + i" :d="s.d" fill="none" :stroke="s.color" stroke-width="2" />
                  <path :d="yearDots" stroke="#00ffff" />
                  <path v-for="(s, i) in fast.lines" :key="'f' + i" :d="s.d" fill="none" :stroke="s.color" />
                  <path v-for="s in fastCrosses" :key="'fc' + s.color" :d="s.d" :stroke="s.color" />
                  <path v-for="s in slowCrosses" :key="'sc' + s.color" :d="s.d" :stroke="s.color" />
                  <path v-for="s in bigDots" :key="'bd' + s.color" :d="s.d" :fill="s.color" />
                  <path v-for="(s, i) in shortLine" :key="'s' + i" :d="s.d" fill="none" :stroke="s.color" :stroke-width="s.color === '#0000ff' ? 3 : 2" />
                  <rect v-for="x in signalDots" :key="x" :x="x - 1" y="64" width="2" height="2" fill="#ff00ff" />
                  <path d="M1395 67l11 3M1395 67h4M1395 67v4M356 394h12M356 394l4-3M356 394l4 3" stroke="#c0c0c0" fill="none" />
                  <text x="1408" y="83">2.810</text>
                  <text x="370" y="395">1.136</text>
                </svg>
              </div>
              <svg class="axis"><g v-for="s in mainScale" :key="s.t"><text x="45" :y="s.y + 7">{{ s.t }}</text><path :d="`M0 ${s.y}h4`" /></g></svg>
            </section>

            <section class="panel sar-panel">
              <div class="plot">
                <div class="titles low">
                  <svg class="knob" width="12" height="12" viewBox="0 0 12 12"><circle cx="6" cy="6" r="6" fill="#787878" /><path d="M3 5l3 3 3-3" fill="none" stroke="#000" /></svg>
                  <span v-for="r in sarReadings" :key="r.text" class="reading" :style="{ color: r.color }">{{ r.text }}<svg v-if="r.dir" class="dir" width="9" height="16" viewBox="0 0 9 16"><path d="M5 1v13M5 14l-2-4h4z" fill="#54ffff" stroke="#54ffff" /></svg></span>
                </div>
                <svg class="canvas" viewBox="0 437 1553 148" preserveAspectRatio="none">
                  <path :d="sarRise" fill="none" stroke="#ff3232" />
                  <path :d="sarFall" fill="none" stroke="#54ffff" />
                  <path v-for="s in sarDots" :key="s.color" :d="s.d" :fill="s.color" />
                  <path :d="sarGlints" stroke="#fff" fill="none" stroke-width="0.5" />
                </svg>
              </div>
              <svg class="axis"><g v-for="s in sarScale" :key="s.t"><text x="45" :y="s.y + 7">{{ s.t }}</text><path :d="`M0 ${s.y}h4`" /></g></svg>
            </section>

            <section class="panel qd-panel">
              <div class="plot">
                <div class="titles wide">
                  <svg class="knob" width="12" height="12" viewBox="0 0 12 12"><circle cx="6" cy="6" r="6" fill="#787878" /><path d="M3 5l3 3 3-3" fill="none" stroke="#000" /></svg>
                  <span v-for="r in qdReadings" :key="r.text" class="reading" :style="{ color: r.color }">{{ r.text }}<svg v-if="r.dir" class="dir" width="9" height="16" viewBox="0 0 9 16"><path v-if="r.dir === 'up'" d="M5 15V1M5 1l-2 4h4z" fill="#ff3232" stroke="#ff3232" /><path v-else d="M5 1v13M5 14l-2-4h4z" fill="#54ffff" stroke="#54ffff" /></svg></span>
                </div>
                <svg class="canvas" viewBox="0 610 1553 155" preserveAspectRatio="none">
                  <path d="M5 644.5H1509M5 730.5H1509" stroke="#fff" stroke-dasharray="3 3" />
                  <path v-for="(s, i) in dLines" :key="'d' + i" :d="s.d" fill="none" :stroke="s.color" stroke-width="3" />
                  <path v-for="(s, i) in k.lines" :key="'k' + i" :d="s.d" fill="none" :stroke="s.color" />
                  <path v-for="s in kCrosses" :key="'kc' + s.color" :d="s.d" :stroke="s.color" />
                  <path v-for="(s, i) in jLines" :key="'j' + i" :d="s.d" fill="none" :stroke="s.color" />
                  <path v-for="s in jDots" :key="'jd' + s.color" :d="s.d" :fill="s.color" />
                  <path :d="jGlints" stroke="#fff" fill="none" stroke-width="0.5" />
                  <g v-for="h in qdHands" :key="h.x" :transform="`translate(${h.x} ${h.y}) scale(1 ${h.down ? -1 : 1})`">
                    <path d="M-5-7h2v6h2l6 2v5l-2 2h-5l-4-6 1-2z" fill="#ffd28c" stroke="#7a4a18" />
                  </g>
                </svg>
              </div>
              <svg class="axis">
                <g v-for="s in qdScale" :key="s.t"><text x="45" :y="s.y + 7">{{ s.t }}</text><path :d="`M0 ${s.y}h4`" /></g>
                <rect x="0" y="78" width="50" height="17" fill="#000080" /><path d="M0 78h50M0 95h50" />
                <text class="cursor" x="0" y="95">56.78</text>
              </svg>
            </section>

            <section class="panel mq-panel">
              <div class="plot">
                <div class="titles">
                  <svg class="knob" width="12" height="12" viewBox="0 0 12 12"><circle cx="6" cy="6" r="6" fill="#787878" /><path d="M3 5l3 3 3-3" fill="none" stroke="#000" /></svg>
                  <span v-for="r in mqReadings" :key="r.text" class="reading" :class="{ gap: r.gap }" :style="{ color: r.color }">{{ r.text }}<svg v-if="r.dir" class="dir" width="9" height="16" viewBox="0 0 9 16"><path v-if="r.dir === 'up'" d="M5 15V1M5 1l-2 4h4z" fill="#ff3232" stroke="#ff3232" /><path v-else d="M5 1v13M5 14l-2-4h4z" fill="#54ffff" stroke="#54ffff" /></svg></span>
                </div>
                <svg class="canvas" viewBox="0 790 1553 132" preserveAspectRatio="none">
                  <path :d="stemsUp" stroke="#ff3232" /><path :d="stemsDown" stroke="#54ffff" />
                  <path d="M5 878.5H1511" stroke="#fff" />
                  <path v-for="s in stemDots" :key="s.color" :d="s.d" :fill="s.color" />
                  <path :d="stemGlints" stroke="#fff" fill="none" stroke-width="0.5" />
                  <rect v-for="b in blocks" :key="b.x" :x="b.x" :y="b.y" width="7" :height="b.h" :fill="b.color" />
                  <path v-for="a in sellArrows" :key="a[0]" :d="`M${a[0] - 1} ${a[1]}h2v6h3l-4 6-4-6h3z`" fill="#00e600" />
                  <path v-for="a in buyArrows" :key="a[0]" :d="`M${a[0] - 1} ${a[1] + 11}h2v-6h3l-4-6-4 6h3z`" fill="#ff0000" />
                  <path d="M402 915l5 7h-10z" fill="#ff0000" />
                  <g v-for="h in mqHands" :key="h.x" :transform="`translate(${h.x} ${h.y}) scale(1 ${h.down ? -1 : 1})`">
                    <path d="M-5-7h2v6h2l6 2v5l-2 2h-5l-4-6 1-2z" fill="#ffd28c" stroke="#7a4a18" />
                  </g>
                  <path d="M1027 866h10l3 3-8 9-8-9z" fill="#ffb464" stroke="#b46428" /><path d="M1027 868h10l-5 6z" fill="#fff0d8" />
                </svg>
              </div>
              <svg class="axis boxed"><g v-for="s in mqScale" :key="s.t"><text x="44" :y="s.y + 7">{{ s.t }}</text><path :d="`M0 ${s.y}h4`" /></g></svg>
            </section>

            <section class="panel dates">
              <svg class="plot">
                <path :d="minorTicks" />
                <text x="5" y="19">2018年</text>
                <g v-for="m in months" :key="m[0]"><path :d="`M${m[0]} 0v16`" /><text :x="m[0] + 1" y="19">{{ m[1] }}</text></g>
                <rect x="1324" y="0" width="137" height="16" fill="#000080" />
                <text class="cursor" x="1325" y="19">2020/06/05/五</text>
              </svg>
              <svg class="axis"><text class="cursor" x="4" y="17">周线</text></svg>
            </section>

            <div class="tabs">
              <button v-for="t in tabs" :key="t" :class="{ on: t === '设置' }">{{ t }}</button>
              <span class="fill"></span>
              <button class="left-line">指标B</button><button>模 板</button><button class="zoom">+</button><button class="zoom last">−</button>
            </div>
            <div class="tabs second"><button>扩展∧</button><button>关联报价</button></div>
          </div>

          <aside class="quotes">
            <h1><sup>R</sup><b>159915</b><span>创业板</span></h1>
            <div class="sec one"><table><tbody><tr><th>委比</th><td class="r">57.94%</td><th>委差</th><td class="r">15082</td></tr></tbody></table></div>
            <div class="sec five"><table><tbody><tr v-for="a in asks" :key="a[0]"><th>{{ a[0] }}</th><td class="r">{{ a[1] }}</td><th></th><td class="y">{{ a[2] }}</td></tr></tbody></table></div>
            <div class="sec five"><table><tbody><tr v-for="a in bids" :key="a[0]"><th>{{ a[0] }}</th><td :class="a[3]">{{ a[1] }}</td><th></th><td class="y">{{ a[2] }}</td></tr></tbody></table></div>
            <div class="sec five"><table><tbody><tr v-for="a in now" :key="a[0]"><th>{{ a[0] }}</th><td :class="a[2]">{{ a[1] }}</td><th>{{ a[3] }}</th><td :class="a[5]">{{ a[4] }}</td></tr></tbody></table></div>
            <div class="sec three"><table><tbody><tr v-for="a in pv" :key="a[0]"><th>{{ a[0] }}</th><td :class="a[2]">{{ a[1] }}</td><th>{{ a[3] }}</th><td :class="a[5]">{{ a[4] }}</td></tr></tbody></table></div>
            <p class="kind">20%涨跌停价基金</p>
            <div class="sec two">
              <div v-for="f in flows" :key="f.name" class="flow"><span>{{ f.name }}</span><i :style="{ width: f.bar + 'px' }"></i><b>{{ f.amount }}</b><em>{{ f.pct }}</em></div>
            </div>
            <div class="deals">
              <table><tbody>
                <tr v-for="(d, i) in deals" :key="i">
                  <td class="time">{{ d.time }}</td>
                  <td class="price"><template v-if="d.bid"><b>2.{{ d.bid }}</b><span :class="{ flat: d.bid === '455' }">/{{ d.ask }}</span><span v-if="d.bid !== '455'" class="plus"> +</span></template></td>
                  <td class="volume">{{ d.volume }}</td>
                  <td :class="['flag', d.side]">{{ d.side }}</td>
                </tr>
              </tbody></table>
            </div>
            <div class="tabs second quote-tabs"><button class="on">笔</button><button>价</button></div>
          </aside>
        </div>

        <div class="actions">
          <button v-for="a in actions" :key="a.label"><svg width="28" height="28" viewBox="0 0 28 28" v-html="a.art"></svg><span>{{ a.label }}</span></button>
        </div>
        <div class="status">
          <a v-for="l in links" :key="l.label" href="#"><svg width="16" height="16" viewBox="0 0 16 16" v-html="l.art"></svg>{{ l.label }}</a>
          <svg class="list" width="17" height="14" viewBox="0 0 17 14"><path d="M7 1h10M9 5h8M10 9h7M9 13h8" stroke="#1e9be6" stroke-width="2" /><path d="M0 1l7 2-2 2 4 5-2 2-4-5-2 2z" fill="#1e9be6" /></svg>
          <div v-for="x in indices" :key="x.name" class="index" :class="{ down: x.down }"><span>{{ x.name }}</span><b>{{ x.price }}</b><b>{{ x.change }}</b><b>{{ x.pct }}</b><span>{{ x.amount }}</span></div>
          <i class="count">2</i><span>已连接</span>
        </div>
      </div>

      <aside class="side">
        <template v-for="(s, i) in sideIcons" :key="i">
          <button v-if="s.art" :aria-label="s.name"><svg width="16" height="16" viewBox="0 0 16 16" v-html="s.art"></svg></button>
          <hr v-else />
        </template>
        <button v-for="p in periods" :key="p" :class="{ picked: p === '周' }">{{ p }}</button>
      </aside>
    </main>

    <footer class="taskbar">
      <button v-for="a in apps" :key="a.name" :class="['app', a.state]" :aria-label="a.name"><svg width="24" height="24" viewBox="0 0 24 24" v-html="a.art"></svg></button>
      <span class="fill"></span>
      <div class="tray">
        <svg width="14" height="24" viewBox="0 0 14 24"><path d="M1 15l6-6 6 6" fill="none" stroke="#fff" stroke-width="1.5" /></svg>
        <svg width="16" height="24" viewBox="0 0 16 24"><ellipse cx="8" cy="12" rx="6" ry="8" fill="#111" /><ellipse cx="8" cy="15" rx="4" ry="5" fill="#fff" /><path d="M3 10h10v3H3z" fill="#e61414" /><path d="M1 20h6v2H1zM9 20h6v2H9z" fill="#f0a020" /><circle cx="6" cy="7" r="1.5" fill="#fff" /><circle cx="10" cy="7" r="1.5" fill="#fff" /><path d="M5 9h6l-3 2z" fill="#f0a020" /></svg>
        <svg width="17" height="24" viewBox="0 0 17 24"><ellipse cx="8" cy="12" rx="8" ry="8" fill="#ffe01e" /><circle cx="8" cy="12" r="6" fill="#32a028" /><path d="M8 8v8M4 12h8" stroke="#ffe01e" stroke-width="2" /></svg>
        <svg width="17" height="24" viewBox="0 0 17 24"><path d="M1 10h3l4-4v12l-4-4H1zM10 9q2 3 0 6M12 7q4 5 0 10M14 5q5 7 0 14" fill="none" stroke="#fff" /></svg>
        <span class="ime">中</span>
        <span class="pin">拼</span>
        <div class="clock"><span>8:34</span><span>2020-09-26</span></div>
        <svg width="24" height="24" viewBox="0 0 24 24"><path d="M1 5h2v12H1zM5 4h12v14H5z" fill="#fff" /><path d="M7 8h8M7 11h8M7 14h5" stroke="#23323c" /><path d="M10 11h13v12H10z" fill="#e60f0f" /><text x="17" y="20" font-size="9" text-anchor="middle" fill="#fff">6</text></svg>
        <svg class="notes" width="26" height="28" viewBox="0 0 26 28"><path d="M1 4h16v13H7l-4 3v-3H1z" fill="#fff" /><path d="M4 8h10M4 11h10M4 14h6" stroke="#23323c" /><circle cx="17" cy="20" r="7" fill="#303840" stroke="#aaa" /><text x="17" y="24" font-size="12" font-weight="bold" text-anchor="middle" fill="#fff">1</text></svg>
      </div>
    </footer>

    <div class="popup" role="dialog" aria-label="腾讯网游加速器">
      <div class="popup-head"><svg width="14" height="16" viewBox="0 0 14 16"><path d="M7 1c3 0 5 2 5 5l1 5-2 1v3H3v-3l-2-1 1-5c0-3 2-5 5-5z" fill="#fff" /></svg><span>腾讯网游加速器</span><button aria-label="关闭"><svg width="10" height="10" viewBox="0 0 10 10"><path d="M1 1l8 8M9 1L1 9" stroke="#fff" stroke-width="1.5" /></svg></button></div>
      <h2>邀请好友一起领福利！</h2>
      <p>全部免费！新老用户参与活动免费领取<br />STEAM游戏、PUBG道具、王者荣耀手办、<br />糖豆人、加速时长等海量奖品！<br />立即领取&gt; &gt;</p>
      <div class="popup-foot"><button>立即查看</button></div>
    </div>
  </div>
</template>

<style>
body { margin: 0; }
</style>

<style scoped>
* { box-sizing: border-box; }
button { background: none; border: 0; padding: 0; margin: 0; font: inherit; color: inherit; line-height: inherit; }
a { color: inherit; text-decoration: none; }
table { border-collapse: collapse; }
.desktop { position: relative; display: flex; flex-direction: column; height: 100vh; overflow: hidden; background: #000; font-family: "Liberation Sans", "Noto Sans CJK SC", sans-serif; }
.fill { flex: 1; }

.top { flex: none; display: flex; align-items: center; height: 35px; padding: 0 14px 1px; background: #1478eb; border-bottom: 1px solid #70747a; color: #fff; }
.brand { display: flex; flex-direction: column; margin-left: 3px; width: 58px; }
.brand strong { font: 900 14px/16px "Noto Sans CJK SC", sans-serif; }
.brand small { font-size: 4px; line-height: 5px; white-space: nowrap; font-weight: bold; }
.top nav { display: flex; gap: 24px; margin-left: 92px; padding-bottom: 1px; font-size: 14px; font-family: "Noto Sans CJK SC", sans-serif; line-height: 20px; }
.window-tools { margin-left: auto; display: flex; gap: 15px; align-items: center; }
.window-tools button { display: flex; }

.body { flex: 1; min-height: 0; display: flex; }
.left { flex: 1; min-width: 0; display: flex; flex-direction: column; }
.work { flex: 1; min-height: 0; display: flex; }
.charts { flex: 1; min-width: 0; display: flex; flex-direction: column; }
.panel { min-height: 0; display: flex; border-bottom: 1px solid #c00000; }
.main-panel { flex: 378 1 0; }
.sar-panel { flex: 173 1 0; }
.qd-panel { flex: 180 1 0; }
.mq-panel { flex: 157 1 0; }
.plot { flex: 1; min-width: 0; display: flex; flex-direction: column; overflow: hidden; }
.titles { position: relative; flex: none; height: 24px; display: flex; gap: 6px; padding-left: 2px; font-size: 21px; line-height: 24px; white-space: nowrap; overflow: hidden; }
.titles.wide { gap: 7px; }
.titles.low { line-height: 26px; }
.stock { color: #c0c0c0; font-size: 22px; }
.knob { flex: none; margin: 2px -2px 0 0; }
.stock + .knob { margin: 3px -2px 0 0; }
.reading { display: flex; }
.reading.gap { margin-left: 36px; }
.stock ~ .reading:nth-of-type(2) { margin-right: 2px; }
.dir { margin: 1px 0 0 1px; }
.corner { position: absolute; right: 2px; top: 3px; background: #000; }
.canvas { flex: 1; min-height: 0; width: 100%; display: block; shape-rendering: crispEdges; }
.canvas text { font-size: 21px; fill: #c0c0c0; }
.axis { flex: none; width: 51px; height: 100%; border-left: 1px solid #c00000; overflow: hidden; font-size: 21px; shape-rendering: crispEdges; }
.axis.boxed { border: 2px solid #c00000; border-bottom-width: 1px; }
.axis text { fill: #ff3232; text-anchor: end; }
.axis path, .dates path { stroke: #c00000; }
.axis .cursor { fill: #c0c0c0; text-anchor: start; }
.dates { flex: none; height: 16px; font-size: 21px; }
.dates .plot { display: block; height: 15px; }
.dates text { fill: #ff3232; }
.dates .cursor { fill: #c0c0c0; }

.tabs { flex: none; display: flex; height: 17px; border-bottom: 1px solid #c00000; color: #c0c0c0; font-size: 12px; line-height: 15px; overflow: hidden; }
.tabs button { flex: none; padding: 0 3px; border-right: 1px solid #c00000; white-space: nowrap; }
.tabs .on { color: #54ffff; }
.tabs .left-line { border-left: 1px solid #c00000; }
.tabs .zoom { width: 25px; }
.tabs .last { border-right: 0; }
.tabs.second { height: 18px; line-height: 17px; }

.quotes { flex: none; width: 292px; min-height: 0; display: flex; flex-direction: column; border-left: 1px solid #c00000; border-right: 1px solid #c00000; color: #c0c0c0; font-family: "Liberation Serif", "Noto Sans CJK SC", serif; font-size: 22px; }
.quotes h1 { flex: none; display: flex; align-items: center; height: 27px; margin: 0; padding-left: 21px; border-bottom: 1px solid #c00000; font-weight: normal; line-height: 24px; }
.quotes sup { font-size: 10px; font-weight: bold; color: #ff3232; align-self: flex-start; line-height: 18px; margin-right: 4px; }
.quotes h1 b { font: bold 13px/24px "DejaVu Sans", sans-serif; color: #ffff00; }
.quotes h1 span { margin-left: 9px; font-size: 16px; color: #54ffff; }
.quotes table { width: 100%; table-layout: fixed; }
.quotes tr { height: 19px; }
.quotes th, .quotes td { padding: 0; font-weight: normal; line-height: 19px; height: 19px; white-space: nowrap; }
.quotes th { width: 52px; text-align: left; padding-left: 2px; font-size: 20px; }
.quotes td { font-weight: bold; font-size: 21px; text-align: right; padding-right: 1px; }
.sec th:first-child { width: 57px; }
.sec td:nth-child(2) { width: 85px; }
.sec th:nth-child(3) { padding-left: 6px; }
.sec { flex: none; overflow: hidden; border-bottom: 1px solid #c00000; padding-top: 5px; }
.sec.one { height: 20px; padding-top: 3px; }
.five { height: 97px; }
.three { height: 61px; }
.two { height: 42px; }
.kind { flex: none; height: 20px; margin: 0; padding-left: 1px; border-bottom: 1px solid #c00000; color: #ff00ff; font-weight: bold; line-height: 23px; white-space: nowrap; overflow: hidden; }
.r { color: #ff3232; }
.g { color: #00e600; }
.y { color: #c0c000; }
.w { color: #fff; }
.flow { position: relative; display: flex; height: 19px; line-height: 19px; padding-left: 2px; font-size: 21px; }
.flow i { position: absolute; left: 70px; top: 1px; height: 7px; background: #ff3232; }
.flow b { margin-left: auto; color: #ff3232; }
.flow em { width: 40px; text-align: right; font-style: normal; color: #ff3232; font-weight: bold; padding-right: 1px; }
.deals { flex: 1; min-height: 0; padding-top: 4px; overflow: hidden; }
.deals tr { height: 18px; }
.deals td { height: 18px; line-height: 18px; font-size: 22px; text-align: left; padding: 0; }
.deals .time { width: 70px; padding-left: 1px; color: #c0c0c0; }
.deals .price { width: 110px; color: #ff3232; }
.deals .plus { font-weight: normal; }
.deals .flat { color: #c0c0c0; }
.deals .volume { text-align: right; width: 78px; color: #c0c000; }
.deals .flag { text-align: right; padding-right: 4px; color: #ff3232; }
.deals .flag.S { color: #00e600; }
.tabs.quote-tabs { height: 19px; border-top: 1px solid #c00000; }
.quote-tabs button { padding: 0 11px; }

.actions { flex: none; display: flex; align-items: center; gap: 24px; height: 39px; padding: 0 15px; background: #c8c8c8; color: #101010; font-family: "Noto Sans CJK SC", sans-serif; font-size: 15px; line-height: 20px; white-space: nowrap; }
.actions button { display: flex; align-items: center; gap: 12px; }
.status { flex: none; display: flex; align-items: center; height: 27px; padding-left: 5px; background: #e4e4e4; color: #101010; font-size: 12px; line-height: 16px; white-space: nowrap; }
.status a { display: flex; align-items: center; gap: 4px; margin-right: 15px; }
.list { margin-right: 4px; }
.index { display: grid; grid-template-columns: 28px 46px 40px 50px 56px; color: #101010; }
.index b { font: bold 11px/16px "DejaVu Sans Condensed", "Liberation Sans", sans-serif; color: #ff0000; text-align: right; }
.index b:nth-child(2) { text-align: left; }
.index span:last-child { padding-left: 6px; }
.index.down b { color: #008000; }
.count { width: 16px; height: 16px; margin: 0 2px 0 6px; background: #1e8ce6; border-radius: 2px; color: #fff; text-align: center; font-style: normal; }

.side { flex: none; width: 24px; display: flex; flex-direction: column; background: #f0f0f0; border-left: 1px solid #fff; color: #003c9c; font-size: 13px; }
.side button { flex: none; height: 23px; display: flex; align-items: center; justify-content: center; line-height: 20px; }
.side button:first-child { height: 21px; }
.side hr { flex: none; width: 18px; height: 1px; margin: 4px auto 3px; border: 0; background: #999; }
.side .picked { background: #fafafa; border: 1px solid #999; border-right-color: #fff; border-bottom-color: #fff; }

.taskbar { flex: none; display: flex; align-items: stretch; height: 40px; background: linear-gradient(90deg, #22333d, #26343b 25%, #323a38 34%, #26343c 50%, #2a2d30 66%, #1c2a34); color: #fff; }
.app { flex: none; width: 49px; display: flex; align-items: center; justify-content: center; border-bottom: 2px solid transparent; padding-top: 2px; }
.app.system { width: 48px; }
.app.view { margin-right: 4px; }
.app.running { width: 41px; margin: 0 4px; border-bottom-color: #76b9ed; }
.app.active { background: #53606a; border-bottom-color: #76b9ed; }
.tray { display: flex; align-items: center; gap: 8px; padding-right: 15px; font-size: 12px; line-height: 16px; }
.ime { font-size: 15px; margin-left: -2px; }
.pin { width: 16px; height: 16px; margin: 0 10px 0 6px; background: #fff; color: #000; text-align: center; line-height: 15px; }
.clock { display: flex; flex-direction: column; align-items: center; line-height: 19px; margin: 0 12px 0 0; font-family: "Noto Sans", sans-serif; }
.notes { margin: 0 0 0 8px; }

.popup { position: absolute; right: 19px; bottom: 41px; width: 244px; height: 169px; display: flex; flex-direction: column; background: #fcfdff; border-radius: 2px; font-family: "Noto Sans CJK SC", sans-serif; font-size: 12px; overflow: hidden; }
.popup-head { flex: none; display: flex; align-items: center; gap: 3px; height: 26px; padding: 0 7px 5px 5px; background: #74c5ff; color: #000; line-height: 18px; }
.popup-head button { margin-left: auto; display: flex; padding-top: 6px; }
.popup h2 { margin: 5px 0 6px; font-size: 16px; line-height: 20px; font-weight: normal; text-align: center; color: #000; }
.popup p { flex: 1; margin: 0; padding: 2px 0 0 8px; color: #666; line-height: 17px; white-space: nowrap; }
.popup-foot { flex: none; display: flex; justify-content: flex-end; padding: 6px 6px; border-top: 1px solid #dde2e6; }
.popup-foot button { width: 75px; height: 23px; background: #74c5ff; border-radius: 3px; line-height: 20px; color: #000; }
</style>
